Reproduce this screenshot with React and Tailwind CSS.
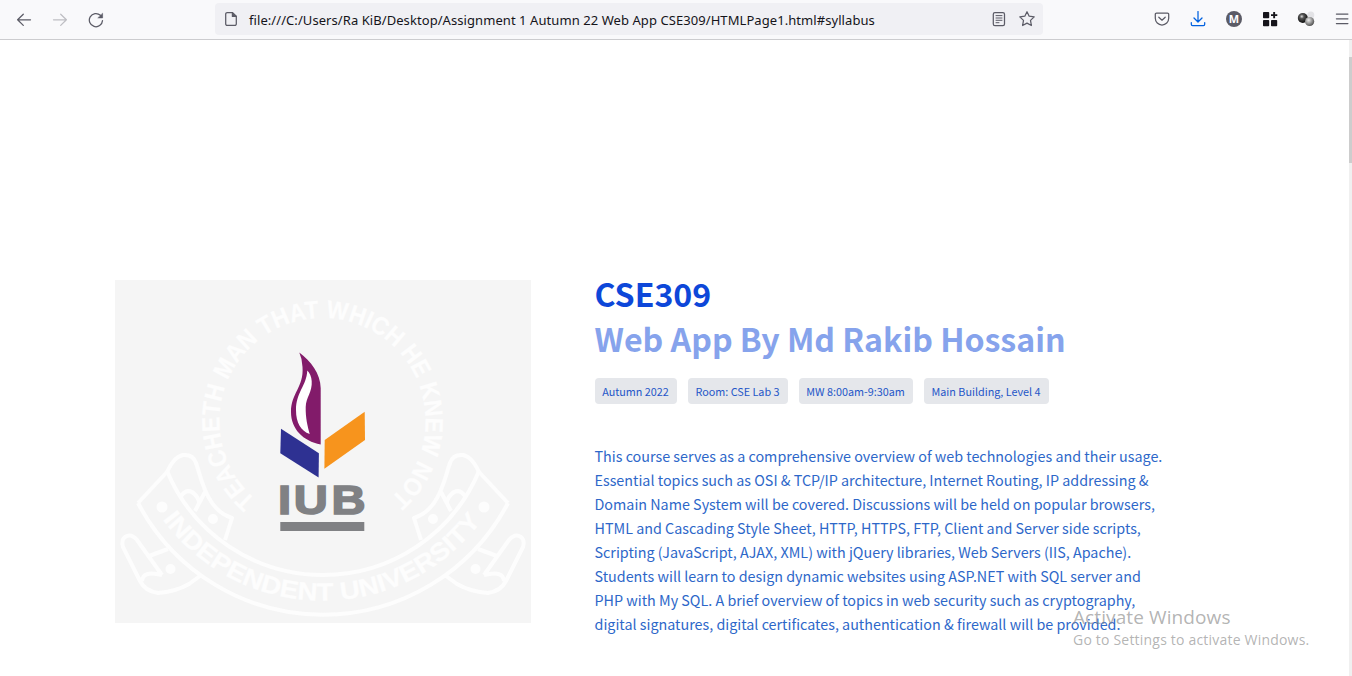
const LINES = [
  'This course serves as a comprehensive overview of web technologies and their usage.',
  'Essential topics such as OSI & TCP/IP architecture, Internet Routing, IP addressing &',
  'Domain Name System will be covered. Discussions will be held on popular browsers,',
  'HTML and Cascading Style Sheet, HTTP, HTTPS, FTP, Client and Server side scripts,',
  'Scripting (JavaScript, AJAX, XML) with jQuery libraries, Web Servers (IIS, Apache).',
  'Students will learn to design dynamic websites using ASP.NET with SQL server and',
  'PHP with My SQL. A brief overview of topics in web security such as cryptography,',
  'digital signatures, digital certificates, authentication & firewall will be provided.',
];

function Icon({ children, className = '' }) {
  return (
    <svg
      viewBox="0 0 16 16"
      className={`size-4 shrink-0 ${className}`}
      fill="none"
      stroke="currentColor"
      strokeWidth="1.25"
      strokeLinecap="round"
      strokeLinejoin="round"
    >
      {children}
    </svg>
  );
}

function Toolbar() {
  return (
    <header className="flex h-10 items-center overflow-hidden border-b border-[#cccccf] bg-[#f9f9fb] text-[#5b5b66]">
      <div className="flex w-[215px] shrink-0 items-center gap-5 pl-4">
        <Icon><path d="M14.5 7.8H1.6M7.3 2.2 1.6 7.8l5.7 5.6" /></Icon>
        <Icon className="text-[#bebec3]"><path d="M1.5 7.8h12.9M8.7 2.2l5.7 5.6-5.7 5.6" /></Icon>
        <Icon>
          <path d="M14.5 8.6A6.6 6.6 0 1 1 12.4 3.3" />
          <path d="M14.6 1.6v4.3h-4.4z" fill="currentColor" strokeWidth=".6" />
        </Icon>
      </div>
      <div className="mb-px flex h-8 w-[828px] shrink-0 items-center rounded bg-[#f0f0f4] pl-2 pr-2">
        <Icon>
          <path d="M9.6 1.6H4.2a1.5 1.5 0 0 0-1.500 1.500v9.800a1.500 1.500 0 0 0 1.500 1.500h7.600a1.500 1.500 0 0 0 1.500-1.500V5.300z" />
          <path d="M9.400 1.800v3.600h3.700" fill="currentColor" />
        </Icon>
        <span className="ml-2.5 mt-0.5 w-[742px] whitespace-nowrap font-['Noto_Sans',sans-serif] text-[13px] leading-5 tracking-[0.07px] text-[#15141a]">
          file:///C:/Users/Ra KiB/Desktop/Assignment 1 Autumn 22 Web App CSE309/HTMLPage1.html#syllabus
        </span>
        <Icon>
          <rect x="2.300" y="1.600" width="11.200" height="13" rx="1.600" />
          <path d="M5 4.600h6M5 7h6M5 9.300h6M5 11.700h3" strokeWidth="1" />
        </Icon>
        <Icon className="ml-3">
          <path d="M8 .700 10.200 5.200l5 .700-3.700 3.500.900 5.100L8 12.100l-4.400 2.400.900-5.100L.800 5.900l5-.700z" />
        </Icon>
      </div>
      <div className="mb-px ml-[111px] flex shrink-0 items-center gap-5">
        <Icon>
          <path d="M2.500 2.100h11a1.200 1.200 0 0 1 1.200 1.200v4a6.700 6.700 0 0 1-13.400 0v-4a1.200 1.200 0 0 1 1.200-1.200z" />
          <path d="M4.800 6.200 8 9.200l3.200-3" />
        </Icon>
        <Icon className="text-[#0061e0]">
          <path d="M8 .500v10M4 7l4 4 4-4M1.300 11.600v1.600a1.300 1.300 0 0 0 1.300 1.300h10.800a1.300 1.300 0 0 0 1.300-1.300v-1.600" />
        </Icon>
        <svg viewBox="0 0 16 16" className="size-4 shrink-0">
          <circle cx="8" cy="8" r="8" fill="#5b5b66" />
          <text x="8" y="12" textAnchor="middle" fontSize="11" fontWeight="700" fontFamily="Open Sans, sans-serif" fill="#fff">M</text>
        </svg>
        <svg viewBox="0 0 16 16" className="size-4 shrink-0" fill="#15141a">
          <rect x="1" y="1" width="6.200" height="6.200" rx=".8" />
          <rect x="1" y="9" width="6.200" height="6.200" rx=".8" />
          <rect x="9" y="9" width="6.200" height="6.200" rx=".8" />
          <path d="M11.200 1h1.900v2.200h2.200v1.900h-2.200v2.200h-1.900V5.100H9V3.200h2.200z" />
        </svg>
        <svg viewBox="0 0 16 16" className="size-4 shrink-0 overflow-visible">
          <defs>
            <radialGradient id="dark" cx=".4" cy=".35" r=".6">
              <stop offset="0" stopColor="#ddd" />
              <stop offset=".35" stopColor="#555" />
              <stop offset="1" stopColor="#111" />
            </radialGradient>
            <radialGradient id="light" cx=".4" cy=".35" r=".7">
              <stop offset="0" stopColor="#eee" />
              <stop offset=".5" stopColor="#999" />
              <stop offset="1" stopColor="#444" />
            </radialGradient>
          </defs>
          <circle cx="12.800" cy="4" r="3.500" fill="#e3e3e6" />
          <circle cx="4.800" cy="7" r="5" fill="url(#dark)" />
          <circle cx="11.600" cy="10.500" r="4.600" fill="url(#light)" />
        </svg>
        <Icon><path d="M2.400 3h11.500M2.400 7.800h11.500M2.400 12.600h11.500" /></Icon>
      </div>
    </header>
  );
}

function Ribbon() {
  return (
    <g>
      <path d="M52 192C56 184 60 177 68 175Q78 174 81 183C86 198 88 208 94 218Q102 233 117 238L110 260" />
      <path d="M52 192 23 223" />
      <path d="M66 216Q71 209 77 212Q84 217 84 223M90 212 80 231" />
      <path d="M53 269 34 276M47 295 22 260Q16 253 10 257Q6 260 8 267L25 301Q30 311 43 313Q60 312 74 304L85 296M47 295Q28 290 27 301" />
      <circle cx="47" cy="227" r="3.500" fill="#fdfdfd" />
      <circle cx="98" cy="239" r="3" fill="#fdfdfd" />
      <circle cx="55.500" cy="289" r="3" fill="#fdfdfd" />
    </g>
  );
}

function Emblem() {
  return (
    <svg viewBox="0 0 416 343" className="h-[343px] w-[416px] shrink-0 bg-[#f5f5f5]">
      <defs>
        <path id="ring" d="M140.900 219.600A103 103 0 1 1 270.900 222.200" />
        <path id="banner" d="M47.500 239.400A198 198 0 0 0 367.500 239.400" />
      </defs>
      <g fill="none" stroke="#fdfdfd" strokeWidth="4" strokeLinejoin="round">
        <path d="M52 191A169 169 0 0 0 364 191" />
        <path d="M23 223A209 209 0 0 0 393 223" />
        <Ribbon />
        <g transform="translate(416 0) scale(-1 1)"><Ribbon /></g>
      </g>
      <g fill="#fdfdfd" stroke="#fdfdfd" strokeWidth=".3" fontFamily="Liberation Sans, sans-serif" fontWeight="700" fontSize="25">
        <text textLength="500" lengthAdjust="spacingAndGlyphs">
          <textPath href="#ring" textLength="500" lengthAdjust="spacingAndGlyphs">TEACHETH MAN THAT WHICH HE KNEW NOT</textPath>
        </text>
        <text textLength="370" lengthAdjust="spacingAndGlyphs">
          <textPath href="#banner" textLength="370" lengthAdjust="spacingAndGlyphs">INDEPENDENT UNIVERSITY</textPath>
        </text>
      </g>
      <path
        fill="#821b6a"
        d="M184.300 72.500C196 81 205.500 94 205.700 108V164.500C188 161 176 149 176 132C176 113 189 107 187.500 87Q187.300 79 184.300 72.500Z"
      />
      <path fill="#fff" d="M192.300 90.500C191.500 106 181 112 181 130C181 143 186 151 194.700 154C192.500 146 190.500 138 190.700 127C191 117 197.500 112 196.700 101Q196 94 192.300 90.500Z" />
      <path fill="#2e3192" d="M166 148.700 203.900 173.300 203.600 197.500 165.300 173.300z" />
      <path fill="#f7941d" d="M249.700 131.700 250 160 209.400 188.700 209.700 160z" />
      <text
        transform="scale(1.18 1)"
        x="138.200 151.400 183.500"
        y="233.600"
        fontFamily="Liberation Sans, sans-serif"
        fontWeight="700"
        fontSize="40"
        fill="#808184"
        stroke="#808184"
        strokeWidth="1.600"
      >
        IUB
      </text>
      <path fill="#808184" d="M165.300 242h84v9h-84z" />
    </svg>
  );
}

function Tag({ children, className }) {
  return (
    <li className={`flex h-[26px] items-center justify-center whitespace-nowrap rounded bg-[#e5e7eb] pt-px text-[10.8px] text-[#2456c8] ${className}`}>
      {children}
    </li>
  );
}

export default function App() {
  return (
    <div className="relative flex h-[676px] w-[1352px] flex-col overflow-hidden bg-white">
      <Toolbar />
      <div className="flex min-h-0 flex-1 justify-between">
        <main className="flex gap-[63.5px] pl-[115px] pt-60">
          <Emblem />
          <section className="-mt-[9px] font-['Noto_Sans_CJK_SC',sans-serif]">
            <h1 className="whitespace-nowrap text-[32.15px] font-bold leading-[45px] text-[#0d47d9]">
              CSE309
              <span className="block text-[#86a3ec]">Web App By Md Rakib Hossain</span>
            </h1>
            <ul className="mt-[17px] flex gap-[11px]">
              <Tag className="w-[82px]">Autumn 2022</Tag>
              <Tag className="w-[100px]">Room: CSE Lab 3</Tag>
              <Tag className="w-[114px]">MW 8:00am-9:30am</Tag>
              <Tag className="w-[125px]">Main Building, Level 4</Tag>
            </ul>
            <p className="mt-10 whitespace-nowrap text-[14.33px] leading-6 text-[#2d67c9]">
              {LINES.map((line) => (
                <span key={line} className="block">{line}</span>
              ))}
            </p>
          </section>
        </main>
        <div className="w-[3px] bg-[#f0f0f0] pt-[17px]">
          <div className="h-[106px] bg-[#cdcdcd]" />
        </div>
      </div>
      <div className="absolute left-[1073px] top-[604px] whitespace-nowrap font-['Open_Sans',sans-serif] text-[#8a8a8a]/65">
        <div className="text-[19px] leading-[26px] tracking-[0.1px]">Activate Windows</div>
        <div className="text-[14px] leading-5 tracking-[0.2px]">Go to Settings to activate Windows.</div>
      </div>
    </div>
  );
}
